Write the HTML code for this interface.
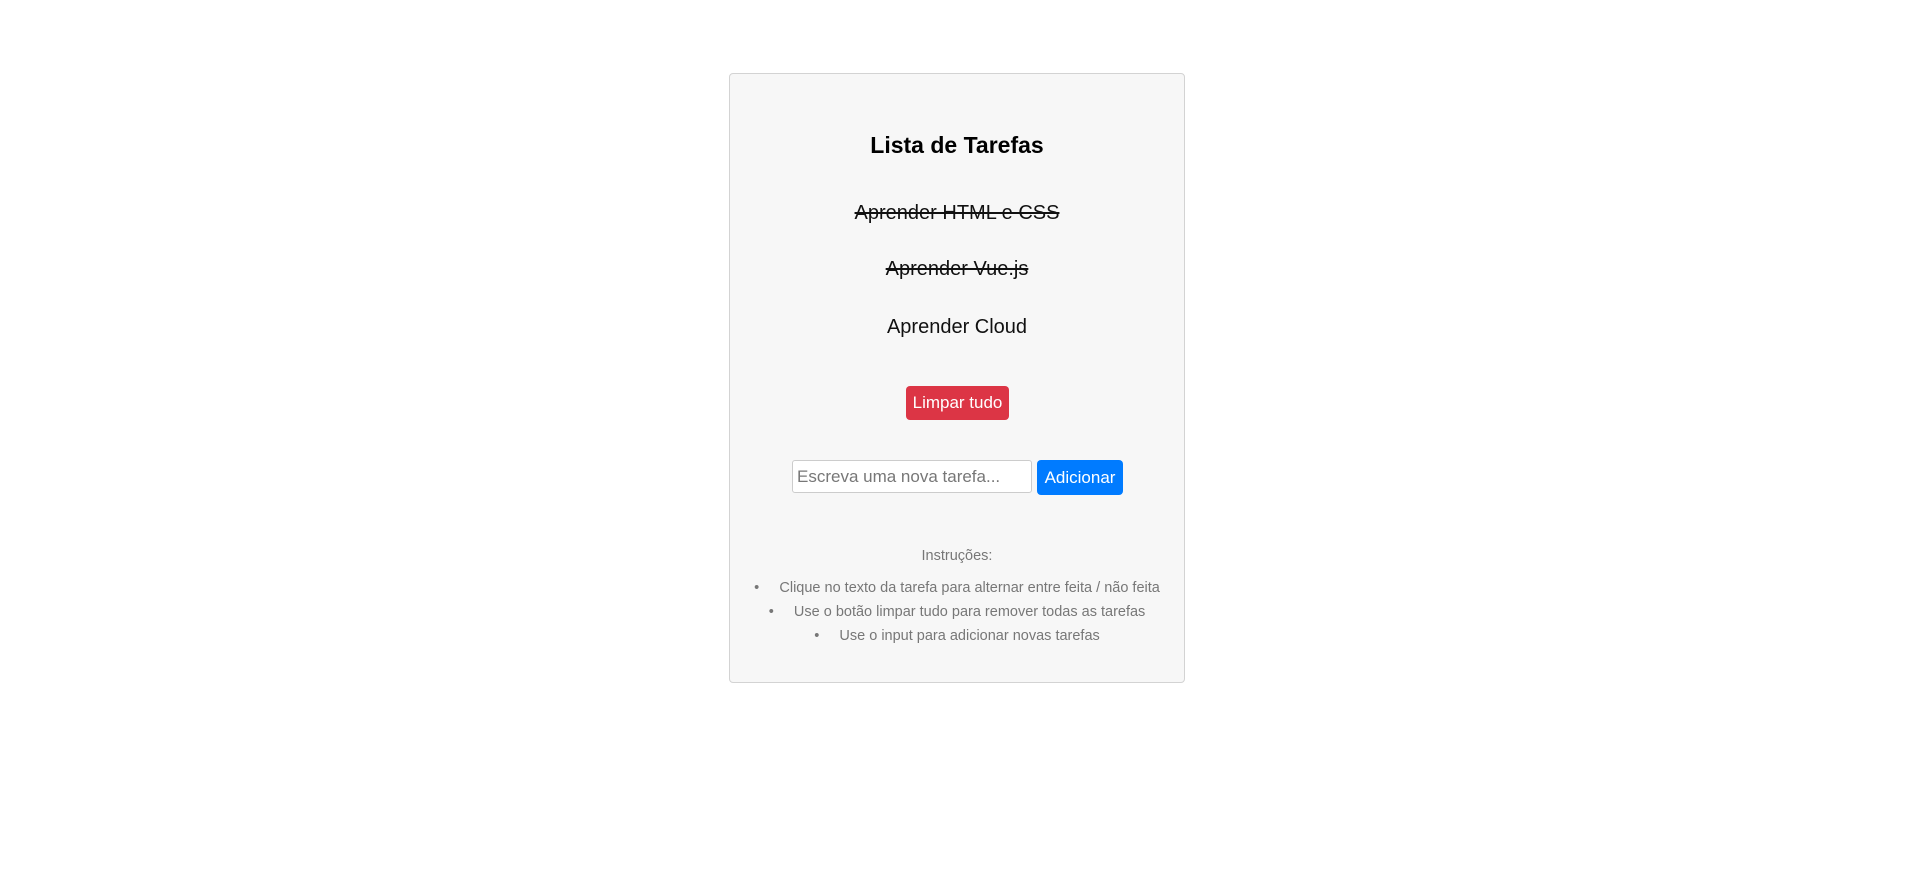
<!DOCTYPE html>
<html><head><meta charset="utf-8"><style>
body{margin:0;width:1919px;height:885px;background:#fff;font-family:"Liberation Sans",sans-serif;position:relative;overflow:hidden}
.box{position:absolute;left:729px;top:73px;width:454px;height:608px;background:#f7f7f7;border:1px solid #d3d3d3;border-radius:4px}
.a{position:absolute;left:0;width:100%;text-align:center}
h1{font-size:23px;font-weight:bold;margin:0}
.t{font-size:20px;color:#111}
.s{text-decoration:line-through}
.btn{position:absolute;border-radius:4px;color:#fff;font-size:17px;display:flex;align-items:center;justify-content:center}
.inst{color:#777;font-size:14.5px}
</style></head><body>
<div class="box">
<div class="a" style="top:58px"><h1>Lista de Tarefas</h1></div>
<div class="a t s" style="top:128px">Aprender HTML e CSS</div>
<div class="a t s" style="top:184px">Aprender Vue.js</div>
<div class="a t" style="top:242px">Aprender Cloud</div>
<div class="btn" style="left:176px;top:312px;width:103px;height:34px;background:#dc3545">Limpar tudo</div>
<div style="position:absolute;left:62px;top:386px;width:240px;height:33px;background:#fff;border:1px solid #ccc;border-radius:3px;box-sizing:border-box;color:#777;font-size:17px;line-height:31px;padding-left:4px">Escreva uma nova tarefa...</div>
<div class="btn" style="left:307px;top:386px;width:86px;height:35px;background:#007bff">Adicionar</div>
<div class="a inst" style="top:474px">Instruções:</div>
<div class="a inst" style="top:506px">•&nbsp;&nbsp;&nbsp;&nbsp;&nbsp;Clique no texto da tarefa para alternar entre feita / não feita</div>
<div class="a inst" style="top:530px">•&nbsp;&nbsp;&nbsp;&nbsp;&nbsp;Use o botão limpar tudo para remover todas as tarefas</div>
<div class="a inst" style="top:554px">•&nbsp;&nbsp;&nbsp;&nbsp;&nbsp;Use o input para adicionar novas tarefas</div>
</div>
</body></html>
